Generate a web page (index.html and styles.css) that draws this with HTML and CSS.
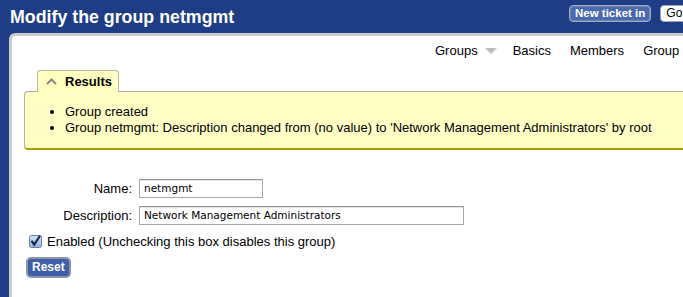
FILE: index.html
```html
<!DOCTYPE html>
<html>
<head>
<meta charset="utf-8">
<link rel="stylesheet" href="styles.css">
</head>
<body>
<div class="page">
  <div class="header">
    <h1 class="title">Modify the group netmgmt</h1>
    <div class="topactions">
      <span class="btn-blue">New ticket in</span>
      <span class="btn-white">Go to ticket</span>
    </div>
  </div>
  <div class="panel">
    <nav class="nav">
      <span class="nav-item">Groups <span class="caret"></span></span>
      <span class="nav-item">Basics</span>
      <span class="nav-item">Members</span>
      <span class="nav-item">Group Rights</span>
    </nav>
    <div class="results">
      <div class="tab">
        <svg class="chev" width="11" height="7" viewBox="0 0 11 7"><path d="M1 6 L5.5 1.5 L10 6" fill="none" stroke="#8a8a8a" stroke-width="2"/></svg>
        <span>Results</span>
      </div>
      <div class="box">
        <ul class="list">
          <li>Group created</li>
          <li>Group netmgmt: Description changed from (no value) to 'Network Management Administrators' by root</li>
        </ul>
      </div>
    </div>
    <form class="form">
      <div class="row">
        <label class="label">Name:</label>
        <span class="input name-input">netmgmt</span>
      </div>
      <div class="row">
        <label class="label">Description:</label>
        <span class="input desc-input">Network Management Administrators</span>
      </div>
      <div class="check-row">
        <svg class="check" width="13" height="13" viewBox="0 0 13 13">
          <defs><linearGradient id="g" x1="0" y1="0" x2="0" y2="1"><stop offset="0" stop-color="#d8e6f8"/><stop offset="1" stop-color="#8fb2e0"/></linearGradient></defs>
          <rect x="0.5" y="0.5" width="12" height="12" rx="2" fill="url(#g)" stroke="#6a7f9e"/>
          <path d="M3 6.5 L5.3 9.5 L10.5 1.5" fill="none" stroke="#1b2a45" stroke-width="2.2" stroke-linecap="round"/>
        </svg>
        <span>Enabled (Unchecking this box disables this group)</span>
      </div>
      <div class="btn-row"><span class="btn-reset">Reset</span></div>
    </form>
  </div>
</div>
</body>
</html>
```
FILE: styles.css
```css
html, body {
  margin: 0;
  padding: 0;
  background: #1e3d86;
  overflow: hidden;
  width: 683px;
  height: 297px;
}
.page {
  width: 900px;
  font-family: "Liberation Sans", Arial, sans-serif;
  font-size: 13px;
  color: #000;
}
.header {
  display: flex;
  align-items: flex-start;
  height: 33px;
}
.title {
  margin: 0;
  padding: 7px 0 0 10px;
  font-size: 17.8px;
  font-weight: bold;
  color: #fff;
  line-height: 20px;
  flex: 0 0 auto;
}
.topactions {
  margin-left: auto;
  display: flex;
  gap: 9px;
  padding-top: 5px;
  width: 331px;
  box-sizing: border-box;
}
.btn-blue {
  display: inline-block;
  height: 17px;
  box-sizing: border-box;
  padding: 0 5px;
  background: #4b69ad;
  border: 1px solid #a2a9b8;
  border-radius: 4px;
  box-shadow: inset 0 0 0 1px #6a84bd;
  color: #fff;
  font-weight: bold;
  font-size: 11.5px;
  line-height: 15px;
}
.btn-white {
  display: inline-block;
  height: 17px;
  box-sizing: border-box;
  padding: 0 5px;
  background: #fff;
  border: 1px solid #9aa;
  border-radius: 4px;
  color: #000;
  font-size: 12px;
  line-height: 15px;
  white-space: nowrap;
}
.panel {
  margin-left: 9px;
  background: #fff;
  border-left: 3px solid #cacaca;
  border-top: 3px solid #cacaca;
  border-top-left-radius: 6px;
  height: 300px;
  box-sizing: border-box;
}
.nav {
  display: flex;
  padding: 7px 0 0 423px;
  height: 25px;
  box-sizing: border-box;
}
.nav-item {
  margin-right: 19px;
  display: flex;
  align-items: center;
  height: 16px;
  line-height: 16px;
}
.caret {
  display: inline-block;
  width: 0;
  height: 0;
  margin-left: 7px;
  border-left: 6px solid transparent;
  border-right: 6px solid transparent;
  border-top: 6px solid #bdbdbd;
}
.nav-item:first-child {
  margin-right: 16px;
}
.results {
  padding: 9px 0 0 12px;
}
.tab {
  margin-left: 13px;
  width: 82px;
  height: 22px;
  box-sizing: border-box;
  background: #ffffbf;
  border: 1px solid #b8b8a0;
  border-bottom: none;
  border-radius: 4px 4px 0 0;
  display: flex;
  align-items: center;
  gap: 8px;
  padding-left: 8px;
  font-weight: bold;
  font-size: 13px;
  position: relative;
  z-index: 1;
  margin-bottom: -1px;
}
.box {
  background: #ffffc6;
  border: 1px solid #b0b0a0;
  border-bottom: 2px solid #a3a000;
  border-right: none;
  border-radius: 4px 0 0 4px;
  height: 59px;
  box-sizing: border-box;
  padding: 12px 0 0 0;
}
.list {
  margin: 0;
  padding-left: 40px;
  line-height: 16px;
}
.list li {
  white-space: nowrap;
}
.form {
  padding: 29px 0 0 0;
}
.row {
  display: flex;
  align-items: center;
  height: 18px;
  margin-bottom: 9px;
}
.label {
  width: 120px;
  text-align: right;
  padding-right: 7px;
}
.input {
  display: inline-block;
  box-sizing: border-box;
  height: 19px;
  border: 1px solid #a9a9a9;
  border-top-color: #949494;
  box-shadow: inset 0 1px 0 #e6e6e6;
  font-family: "DejaVu Sans", sans-serif;
  font-size: 10.5px;
  line-height: 17px;
  padding-left: 4px;
  color: #000;
}
.name-input { width: 124px; }
.desc-input { width: 325px; }
.check-row {
  display: flex;
  align-items: center;
  gap: 5px;
  padding-left: 17px;
  height: 16px;
}
.btn-row {
  padding: 8px 0 0 14px;
}
.btn-reset {
  display: inline-block;
  height: 21px;
  box-sizing: border-box;
  padding: 0 4px;
  background: #3f5ea9;
  border: 2px solid #8e96a6;
  border-radius: 5px;
  color: #fff;
  font-weight: bold;
  font-size: 12px;
  line-height: 17px;
}
```
